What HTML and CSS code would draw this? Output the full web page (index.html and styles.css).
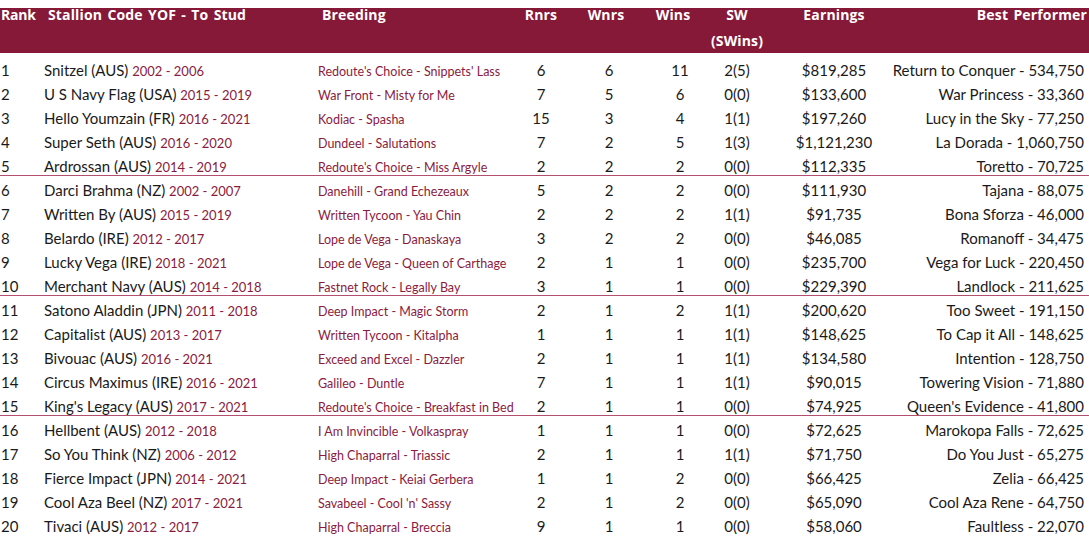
FILE: index.html
```html
<!DOCTYPE html>
<html lang="en">
<head>
<meta charset="utf-8">
<title>Stallion Table</title>
<link rel="stylesheet" href="styles.css">
</head>
<body>
<div class="table">
  <div class="head">
    <div class="hc c-rank">Rank</div>
    <div class="hc c-name">Stallion Code YOF - To Stud</div>
    <div class="hc c-breed">Breeding</div>
    <div class="hc c-rnrs">Rnrs</div>
    <div class="hc c-wnrs">Wnrs</div>
    <div class="hc c-wins">Wins</div>
    <div class="hc c-sw">SW<br>(SWins)</div>
    <div class="hc c-earn">Earnings</div>
    <div class="hc c-best">Best Performer</div>
  </div>
  <div class="body">
    <div class="row"><div class="c-rank">1</div><div class="c-name">Snitzel (AUS) <span class="yr">2002 - 2006</span></div><div class="c-breed">Redoute's Choice - Snippets' Lass</div><div class="c-rnrs">6</div><div class="c-wnrs">6</div><div class="c-wins">11</div><div class="c-sw">2(5)</div><div class="c-earn">$819,285</div><div class="c-best"><span>Return to Conquer - 534,750</span></div></div>
    <div class="row"><div class="c-rank">2</div><div class="c-name">U S Navy Flag (USA) <span class="yr">2015 - 2019</span></div><div class="c-breed">War Front - Misty for Me</div><div class="c-rnrs">7</div><div class="c-wnrs">5</div><div class="c-wins">6</div><div class="c-sw">0(0)</div><div class="c-earn">$133,600</div><div class="c-best"><span>War Princess - 33,360</span></div></div>
    <div class="row"><div class="c-rank">3</div><div class="c-name">Hello Youmzain (FR) <span class="yr">2016 - 2021</span></div><div class="c-breed">Kodiac - Spasha</div><div class="c-rnrs">15</div><div class="c-wnrs">3</div><div class="c-wins">4</div><div class="c-sw">1(1)</div><div class="c-earn">$197,260</div><div class="c-best"><span>Lucy in the Sky - 77,250</span></div></div>
    <div class="row"><div class="c-rank">4</div><div class="c-name">Super Seth (AUS) <span class="yr">2016 - 2020</span></div><div class="c-breed">Dundeel - Salutations</div><div class="c-rnrs">7</div><div class="c-wnrs">2</div><div class="c-wins">5</div><div class="c-sw">1(3)</div><div class="c-earn">$1,121,230</div><div class="c-best"><span>La Dorada - 1,060,750</span></div></div>
    <div class="row sep"><div class="c-rank">5</div><div class="c-name">Ardrossan (AUS) <span class="yr">2014 - 2019</span></div><div class="c-breed">Redoute's Choice - Miss Argyle</div><div class="c-rnrs">2</div><div class="c-wnrs">2</div><div class="c-wins">2</div><div class="c-sw">0(0)</div><div class="c-earn">$112,335</div><div class="c-best"><span>Toretto - 70,725</span></div></div>
    <div class="row"><div class="c-rank">6</div><div class="c-name">Darci Brahma (NZ) <span class="yr">2002 - 2007</span></div><div class="c-breed">Danehill - Grand Echezeaux</div><div class="c-rnrs">5</div><div class="c-wnrs">2</div><div class="c-wins">2</div><div class="c-sw">0(0)</div><div class="c-earn">$111,930</div><div class="c-best"><span>Tajana - 88,075</span></div></div>
    <div class="row"><div class="c-rank">7</div><div class="c-name">Written By (AUS) <span class="yr">2015 - 2019</span></div><div class="c-breed">Written Tycoon - Yau Chin</div><div class="c-rnrs">2</div><div class="c-wnrs">2</div><div class="c-wins">2</div><div class="c-sw">1(1)</div><div class="c-earn">$91,735</div><div class="c-best"><span>Bona Sforza - 46,000</span></div></div>
    <div class="row"><div class="c-rank">8</div><div class="c-name">Belardo (IRE) <span class="yr">2012 - 2017</span></div><div class="c-breed">Lope de Vega - Danaskaya</div><div class="c-rnrs">3</div><div class="c-wnrs">2</div><div class="c-wins">2</div><div class="c-sw">0(0)</div><div class="c-earn">$46,085</div><div class="c-best"><span>Romanoff - 34,475</span></div></div>
    <div class="row"><div class="c-rank">9</div><div class="c-name">Lucky Vega (IRE) <span class="yr">2018 - 2021</span></div><div class="c-breed">Lope de Vega - Queen of Carthage</div><div class="c-rnrs">2</div><div class="c-wnrs">1</div><div class="c-wins">1</div><div class="c-sw">0(0)</div><div class="c-earn">$235,700</div><div class="c-best"><span>Vega for Luck - 220,450</span></div></div>
    <div class="row sep"><div class="c-rank">10</div><div class="c-name">Merchant Navy (AUS) <span class="yr">2014 - 2018</span></div><div class="c-breed">Fastnet Rock - Legally Bay</div><div class="c-rnrs">3</div><div class="c-wnrs">1</div><div class="c-wins">1</div><div class="c-sw">0(0)</div><div class="c-earn">$229,390</div><div class="c-best"><span>Landlock - 211,625</span></div></div>
    <div class="row"><div class="c-rank">11</div><div class="c-name">Satono Aladdin (JPN) <span class="yr">2011 - 2018</span></div><div class="c-breed">Deep Impact - Magic Storm</div><div class="c-rnrs">2</div><div class="c-wnrs">1</div><div class="c-wins">2</div><div class="c-sw">1(1)</div><div class="c-earn">$200,620</div><div class="c-best"><span>Too Sweet - 191,150</span></div></div>
    <div class="row"><div class="c-rank">12</div><div class="c-name">Capitalist (AUS) <span class="yr">2013 - 2017</span></div><div class="c-breed">Written Tycoon - Kitalpha</div><div class="c-rnrs">1</div><div class="c-wnrs">1</div><div class="c-wins">1</div><div class="c-sw">1(1)</div><div class="c-earn">$148,625</div><div class="c-best"><span>To Cap it All - 148,625</span></div></div>
    <div class="row"><div class="c-rank">13</div><div class="c-name">Bivouac (AUS) <span class="yr">2016 - 2021</span></div><div class="c-breed">Exceed and Excel - Dazzler</div><div class="c-rnrs">2</div><div class="c-wnrs">1</div><div class="c-wins">1</div><div class="c-sw">1(1)</div><div class="c-earn">$134,580</div><div class="c-best"><span>Intention - 128,750</span></div></div>
    <div class="row"><div class="c-rank">14</div><div class="c-name">Circus Maximus (IRE) <span class="yr">2016 - 2021</span></div><div class="c-breed">Galileo - Duntle</div><div class="c-rnrs">7</div><div class="c-wnrs">1</div><div class="c-wins">1</div><div class="c-sw">1(1)</div><div class="c-earn">$90,015</div><div class="c-best"><span>Towering Vision - 71,880</span></div></div>
    <div class="row sep"><div class="c-rank">15</div><div class="c-name">King's Legacy (AUS) <span class="yr">2017 - 2021</span></div><div class="c-breed">Redoute's Choice - Breakfast in Bed</div><div class="c-rnrs">2</div><div class="c-wnrs">1</div><div class="c-wins">1</div><div class="c-sw">0(0)</div><div class="c-earn">$74,925</div><div class="c-best"><span>Queen's Evidence - 41,800</span></div></div>
    <div class="row"><div class="c-rank">16</div><div class="c-name">Hellbent (AUS) <span class="yr">2012 - 2018</span></div><div class="c-breed">I Am Invincible - Volkaspray</div><div class="c-rnrs">1</div><div class="c-wnrs">1</div><div class="c-wins">1</div><div class="c-sw">0(0)</div><div class="c-earn">$72,625</div><div class="c-best"><span>Marokopa Falls - 72,625</span></div></div>
    <div class="row"><div class="c-rank">17</div><div class="c-name">So You Think (NZ) <span class="yr">2006 - 2012</span></div><div class="c-breed">High Chaparral - Triassic</div><div class="c-rnrs">2</div><div class="c-wnrs">1</div><div class="c-wins">1</div><div class="c-sw">1(1)</div><div class="c-earn">$71,750</div><div class="c-best"><span>Do You Just - 65,275</span></div></div>
    <div class="row"><div class="c-rank">18</div><div class="c-name">Fierce Impact (JPN) <span class="yr">2014 - 2021</span></div><div class="c-breed">Deep Impact - Keiai Gerbera</div><div class="c-rnrs">1</div><div class="c-wnrs">1</div><div class="c-wins">2</div><div class="c-sw">0(0)</div><div class="c-earn">$66,425</div><div class="c-best"><span>Zelia - 66,425</span></div></div>
    <div class="row"><div class="c-rank">19</div><div class="c-name">Cool Aza Beel (NZ) <span class="yr">2017 - 2021</span></div><div class="c-breed">Savabeel - Cool 'n' Sassy</div><div class="c-rnrs">2</div><div class="c-wnrs">1</div><div class="c-wins">2</div><div class="c-sw">0(0)</div><div class="c-earn">$65,090</div><div class="c-best"><span>Cool Aza Rene - 64,750</span></div></div>
    <div class="row"><div class="c-rank">20</div><div class="c-name">Tivaci (AUS) <span class="yr">2012 - 2017</span></div><div class="c-breed">High Chaparral - Breccia</div><div class="c-rnrs">9</div><div class="c-wnrs">1</div><div class="c-wins">1</div><div class="c-sw">0(0)</div><div class="c-earn">$58,060</div><div class="c-best"><span>Faultless - 22,070</span></div></div>
  </div>
</div>
</body>
</html>
```

FILE: styles.css
```css
html, body {
  margin: 0;
  padding: 0;
  background: #ffffff;
}
body {
  font-family: "Lato", "Liberation Sans", sans-serif;
  color: #1a1a1a;
  overflow: hidden;
}
.table {
  width: 1089px;
  padding-top: 8px;
}
.head, .row {
  display: grid;
  grid-template-columns: 44px 274px 194px 58px 78px 64px 50px 144px 178px;
  white-space: nowrap;
}
.head {
  background: #861838;
  color: #ffffff;
  height: 45px;
  font-family: "Open Sans", "Lato", sans-serif;
  font-weight: 700;
  font-size: 14px;
  line-height: 26px;
  letter-spacing: 0.15px;
  word-spacing: 1.5px;
}
.hc {
  margin-top: -6px;
}
.head .c-rank { padding-left: 1px; letter-spacing: -0.2px; }
.head .c-name { padding-left: 4px; }
.head .c-breed { padding-left: 4px; }
.head .c-wnrs { padding-right: 6px; }
.head .c-wins { padding-right: 14px; }
.head .c-sw { margin-left: -10px; margin-right: -10px; }
.head .c-best { margin-right: -3px; text-align: right; }
.body {
  padding-top: 3px;
}
.row {
  height: 24px;
  box-sizing: border-box;
  padding-top: 4px;
  font-size: 15px;
  line-height: 20px;
  align-items: baseline;
}
.row.sep {
  border-bottom: 1px solid #b3506f;
}
.c-rank { padding-left: 1px; }
.c-rnrs, .c-wnrs, .c-wins, .c-sw, .c-earn { text-align: center; }
.c-best {
  display: flex;
  justify-content: flex-end;
}
.yr {
  color: #8a1b40;
  font-size: 13px;
}
.row .c-breed {
  color: #8a1b40;
  font-size: 12.5px;
}
```
